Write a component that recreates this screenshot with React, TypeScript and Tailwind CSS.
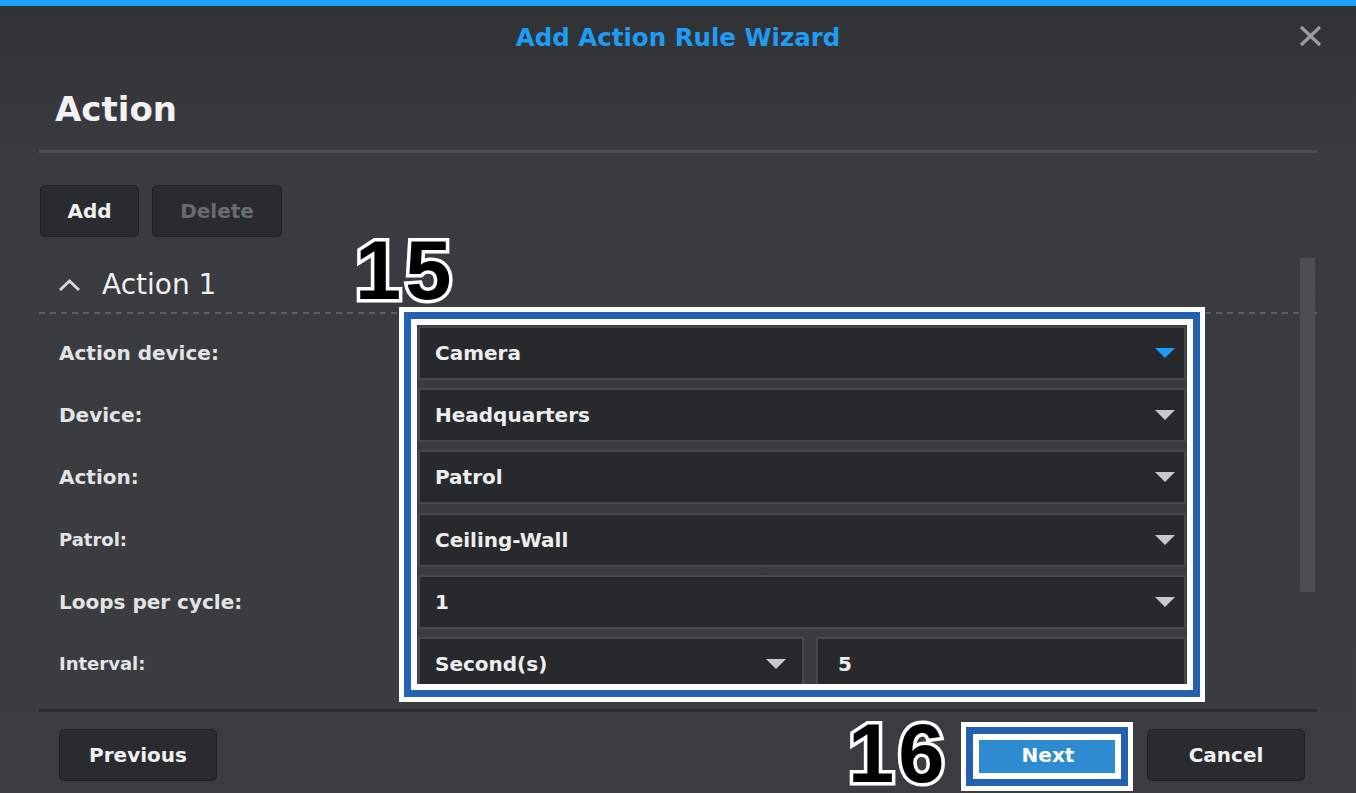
import React from "react";

const font = "font-['DejaVu_Sans','Verdana',sans-serif]";

function Arrow({ blue }: { blue?: boolean }) {
  return (
    <svg width="20" height="10" viewBox="0 0 20 10" className="shrink-0">
      <polygon points="0,0 20,0 10,10" fill={blue ? "#1b9cf7" : "#c9c9c9"} />
    </svg>
  );
}

function Select({ value, blue, className = "" }: { value: string; blue?: boolean; className?: string }) {
  return (
    <div
      className={`flex h-[54px] items-center justify-between border-2 border-[#46484b] bg-[#28292c] pl-[15px] pr-[9px] ${className}`}
    >
      <span className="text-[20px] font-bold text-[#eeeeee]">{value}</span>
      <Arrow blue={blue} />
    </div>
  );
}

function Row({ label, small, children }: { label: string; small?: boolean; children: React.ReactNode }) {
  return (
    <div className="flex items-center">
      <div className={`w-[359px] shrink-0 font-bold text-[#e4e4e4] ${small ? "text-[18px]" : "text-[20px]"}`}>
        {label}
      </div>
      <div className="w-[768px]">{children}</div>
    </div>
  );
}

const stroke = "font-['Liberation_Sans',Arial,sans-serif] text-[83px] font-bold leading-[66px] tracking-[4px] text-black [-webkit-text-stroke:7px_#ffffff] [paint-order:stroke_fill]";

export default function App() {
  return (
    <div
      className={`relative h-[793px] w-[1356px] overflow-hidden bg-[linear-gradient(180deg,#2f3135_0px,#393b3f_150px,#3a3c40_100%)] ${font}`}
    >
      <div className="h-[6px] bg-[#1a9fff]" />

      {/* title bar */}
      <div className="relative flex h-[63px] items-center justify-center pt-[1px]">
        <span className="text-[24.5px] font-bold text-[#1e9bf5]">Add Action Rule Wizard</span>
        <svg width="23" height="22" viewBox="0 0 23 22" className="absolute right-[34px] top-[19px]">
          <path d="M2 2 L21 20 M21 2 L2 20" stroke="#9c9c9c" strokeWidth="3.2" />
        </svg>
      </div>

      <div className="mx-[39px]">
        <div className="flex h-[81px] items-center pl-[16px]">
          <h1 className="text-[34px] font-bold text-[#f2f2f2]">Action</h1>
        </div>
        <div className="h-[3px] bg-[#4b4d51]" />

        <div className="ml-[1px] mt-[32px] flex gap-[13px]">
          <button className="h-[52px] w-[99px] rounded-[5px] border border-[#1f2022] bg-[#2a2b2e] text-[20px] font-bold text-[#f0f0f0]">
            Add
          </button>
          <button className="h-[52px] w-[130px] rounded-[5px] border border-[#1f2022] bg-[#2a2b2e] text-[20px] font-bold text-[#6a6b6d]">
            Delete
          </button>
        </div>

        {/* scrollable section */}
        <div className="relative mt-[21px] h-[450px] overflow-hidden">
          <div className="flex h-[54px] items-center gap-[21px] pl-[19px]">
            <svg width="23" height="14" viewBox="0 0 23 14">
              <polyline points="2,12 11.5,3 21,12" fill="none" stroke="#d6d6d6" strokeWidth="3" />
            </svg>
            <span className="text-[28px] text-[#f0f0f0]">Action 1</span>
          </div>
          <div className="h-[2px] bg-[repeating-linear-gradient(to_right,#5b5e62_0px,#5b5e62_6px,transparent_6px,transparent_11px)]" />

          <div className="mt-[12px] flex flex-col gap-[8.2px] pl-[20px]">
            <Row label="Action device:">
              <Select value="Camera" blue />
            </Row>
            <Row label="Device:">
              <Select value="Headquarters" />
            </Row>
            <Row label="Action:">
              <Select value="Patrol" />
            </Row>
            <Row label="Patrol:" small>
              <Select value="Ceiling-Wall" />
            </Row>
            <Row label="Loops per cycle:">
              <Select value="1" />
            </Row>
            <Row label="Interval:" small>
              <div className="flex gap-[12px]">
                <Select value="Second(s)" className="w-[386px] pr-[16px]" />
                <div className="flex h-[54px] flex-1 items-center border-2 border-[#46484b] bg-[#28292c] pl-[20px] text-[20px] font-bold text-[#eeeeee]">
                  5
                </div>
              </div>
            </Row>
          </div>

          <div className="absolute right-[2px] top-[-1px] h-[335px] w-[15px] bg-[#4c4e52]" />
        </div>

        <div className="mt-[1px] h-[3px] bg-[#2b2d30]" />
      </div>

      {/* footer */}
      <div className="mt-[17px] flex items-center pl-[59px] pr-[51px]">
        <button className="h-[52px] w-[158px] rounded-[5px] border border-[#1f2022] bg-[#2a2b2e] text-[20px] font-bold text-[#f0f0f0]">
          Previous
        </button>
        <div className="flex-1" />
        <div className="relative">
          <button className="h-[52px] w-[158px] rounded-[5px] bg-[#2f8bd1] text-[20px] font-bold text-white">
            Next
          </button>
          <div className="absolute left-[-8px] top-[-7px] h-[69px] w-[172px] border-[5px] border-white">
            <div className="h-full w-full border-[7px] border-[#2461b1]">
              <div className="h-full w-full border-[6px] border-white" />
            </div>
          </div>
          <span className={`absolute left-[-121px] top-[-8px] ${stroke}`}>16</span>
        </div>
        <button className="ml-[20px] h-[52px] w-[158px] rounded-[5px] border border-[#1f2022] bg-[#2a2b2e] text-[20px] font-bold text-[#f0f0f0]">
          Cancel
        </button>
      </div>

      {/* annotation 15 */}
      <div className="absolute left-[399px] top-[307px] h-[395px] w-[806px] border-[5px] border-white">
        <div className="h-full w-full border-[7px] border-[#2461b1]">
          <div className="h-full w-full border-[6px] border-white" />
        </div>
      </div>
      <span className={`absolute left-[355px] top-[238px] ${stroke}`}>15</span>
    </div>
  );
}
